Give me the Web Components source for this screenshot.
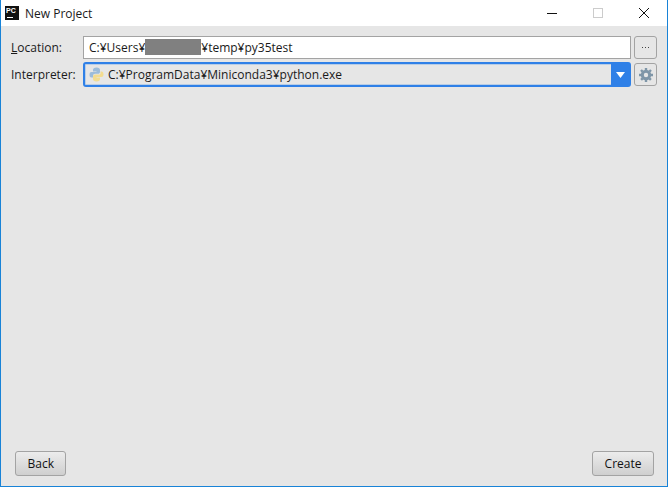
<!DOCTYPE html>
<html>
<head>
<meta charset="utf-8">
<title>New Project</title>
<style>
  html, body { margin: 0; padding: 0; }
  body { font: 12px "Open Sans", "Liberation Sans", sans-serif; color: #1a1a1a; }
</style>
</head>
<body>
<project-window>
  <title-bar slot="title" caption="New Project"></title-bar>
  <form-row slot="form" label="Location:" mnemonic="L">
    <path-field>C:¥Users¥<span style="display:inline-block;width:56px;height:16px;background:#808080;vertical-align:-3px"></span>¥temp¥py35test</path-field>
    <icon-button kind="dots"></icon-button>
  </form-row>
  <form-row slot="form" label="Interpreter:">
    <interpreter-combo>C:¥ProgramData¥Miniconda3¥python.exe</interpreter-combo>
    <icon-button kind="gear"></icon-button>
  </form-row>
  <push-button slot="left">Back</push-button>
  <push-button slot="right">Create</push-button>
</project-window>

<script>
class ProjectWindow extends HTMLElement {
  constructor() {
    super();
    this.attachShadow({ mode: 'open' }).innerHTML = `
      <style>
        :host { display: flex; flex-direction: column; box-sizing: border-box; width: 668px; height: 487px; border: 1px solid #1883d7; border-top: 0; background: #e6e6e6; }
        .form { flex: 1; display: flex; flex-direction: column; gap: 3px; padding: 10px 10px 0 10px; }
        .footer { display: flex; justify-content: space-between; padding: 0 13px 10px 14px; }
      </style>
      <slot name="title"></slot>
      <div class="form"><slot name="form"></slot></div>
      <div class="footer"><slot name="left"></slot><slot name="right"></slot></div>
    `;
  }
}

class TitleBar extends HTMLElement {
  constructor() {
    super();
    this.attachShadow({ mode: 'open' }).innerHTML = `
      <style>
        :host { display: flex; align-items: center; height: 26px; background: #fff; border-top: 0 solid #1883d7; color: #1a1a1a; }
        .logo { width: 14px; height: 14px; margin: 0 6px 0 4px; flex: none; background: #111; color: #fff; font: bold 7px/8px "Liberation Sans", sans-serif; position: relative; overflow: hidden; }
        .logo b { position: absolute; left: 1px; top: 1px; }
        .logo i { position: absolute; left: 2px; bottom: 2px; width: 6px; height: 1px; background: #fff; }
        .caption { flex: 1; font-size: 12px; }
        .ctl { width: 46px; height: 26px; display: flex; align-items: center; justify-content: center; flex: none; }
        svg { display: block; }
      </style>
      <div class="logo"><b>PC</b><i></i></div>
      <div class="caption">${this.getAttribute('caption')}</div>
      <div class="ctl"><svg width="10" height="10"><path d="M0 5.5H10" stroke="#111"/></svg></div>
      <div class="ctl"><svg width="10" height="10"><rect x=".5" y=".5" width="9" height="9" fill="none" stroke="#ccc"/></svg></div>
      <div class="ctl"><svg width="10" height="10"><path d="M0 0L10 10M10 0L0 10" stroke="#111"/></svg></div>
    `;
  }
}

class FormRow extends HTMLElement {
  constructor() {
    super();
    const label = this.getAttribute('label');
    const key = this.getAttribute('mnemonic');
    const text = key ? `<u>${key}</u>${label.slice(1)}` : label;
    this.attachShadow({ mode: 'open' }).innerHTML = `
      <style>
        :host { display: flex; align-items: center; gap: 3px; }
        label { width: 69px; flex: none; font-size: 12px; color: #1a1a1a; }
        u { text-underline-offset: 1px; }
      </style>
      <label>${text}</label>
      <slot></slot>
    `;
  }
}

class PathField extends HTMLElement {
  constructor() {
    super();
    this.attachShadow({ mode: 'open' }).innerHTML = `
      <style>
        :host { flex: 1; display: flex; align-items: center; box-sizing: border-box; height: 23px; padding: 0 5px; background: #fff; border: 1px solid #a3a3a3; white-space: pre; }
      </style>
      <div><slot></slot></div>
    `;
  }
}

class InterpreterCombo extends HTMLElement {
  constructor() {
    super();
    this.attachShadow({ mode: 'open' }).innerHTML = `
      <style>
        :host { flex: 1; display: flex; align-items: center; box-sizing: border-box; height: 25px; margin-left: 0; background: #e6e6e6; border: 2px solid #2f80e7; border-radius: 3px; box-shadow: inset 0 0 0 1px #b8cde6; }
        .icon { margin: 0 4px 0 4px; flex: none; }
        .text { flex: 1; }
        .arrow { width: 19px; align-self: stretch; margin: -1px -1px -1px 0; background: #2f80e7; display: flex; align-items: center; justify-content: center; flex: none; }
        svg { display: block; }
      </style>
      <svg class="icon" width="15" height="15" viewBox="0 0 15 15">
        <path d="M7.5 0.5C5 0.5 4 1.4 4 3V4.5H7.5V5H2.5C1 5 .5 6.3 .5 7.8S1 10.5 2.5 10.5H4V8.8C4 7.6 5 6.8 6 6.8H9C10 6.8 11 6 11 5V3C11 1.4 9.8.5 7.5.5Z" fill="#9dbcd9"/>
        <path d="M7.5 14.5C10 14.5 11 13.6 11 12V10.5H7.5V10H12.5C14 10 14.5 8.7 14.5 7.2S14 4.5 12.5 4.5H11.5V6.2C11.5 7.4 10.5 7.6 9.5 7.6H6C5 7.6 4 8.5 4 9.5V12C4 13.6 5.2 14.5 7.5 14.5Z" fill="#f3dc90"/>
      </svg>
      <div class="text"><slot></slot></div>
      <div class="arrow"><svg width="9" height="6"><path d="M0 0H9L4.5 6Z" fill="#fff"/></svg></div>
    `;
  }
}

class IconButton extends HTMLElement {
  constructor() {
    super();
    const kind = this.getAttribute('kind');
    const dots = `<svg width="8" height="2"><path d="M0 0h1v1H0zM3 0h1v1H3zM6 0h1v1H6z" fill="#444"/></svg>`;
    const gear = `<svg width="14" height="14" viewBox="0 0 14 14"><circle cx="7" cy="7" r="3.7" fill="none" stroke="#7f96a8" stroke-width="3"/><path d="M7 0V14M0 7H14M2 2L12 12M12 2L2 12" stroke="#7f96a8" stroke-width="2.4" stroke-dasharray="2.2 9.6 2.2 100"/></svg>`;
    this.attachShadow({ mode: 'open' }).innerHTML = `
      <style>
        :host { display: flex; align-items: center; justify-content: center; box-sizing: border-box; width: 23px; height: 23px; flex: none; border: 1px solid #a3a3a3; border-radius: 3px; background: #e6e6e6; }
        svg { display: block; }
      </style>
      ${kind === 'gear' ? gear : dots}
    `;
  }
}

class PushButton extends HTMLElement {
  constructor() {
    super();
    this.attachShadow({ mode: 'open' }).innerHTML = `
      <style>
        :host { display: inline-flex; align-items: center; justify-content: center; box-sizing: border-box; height: 25px; padding: 0 11.5px; border: 1px solid #a3a3a3; border-radius: 3px; background: linear-gradient(#ececec, #cfcfcf); font-size: 12px; color: #111; }
      </style>
      <slot></slot>
    `;
  }
}

customElements.define('project-window', ProjectWindow);
customElements.define('title-bar', TitleBar);
customElements.define('form-row', FormRow);
customElements.define('path-field', PathField);
customElements.define('interpreter-combo', InterpreterCombo);
customElements.define('icon-button', IconButton);
customElements.define('push-button', PushButton);
</script>
</body>
</html>
